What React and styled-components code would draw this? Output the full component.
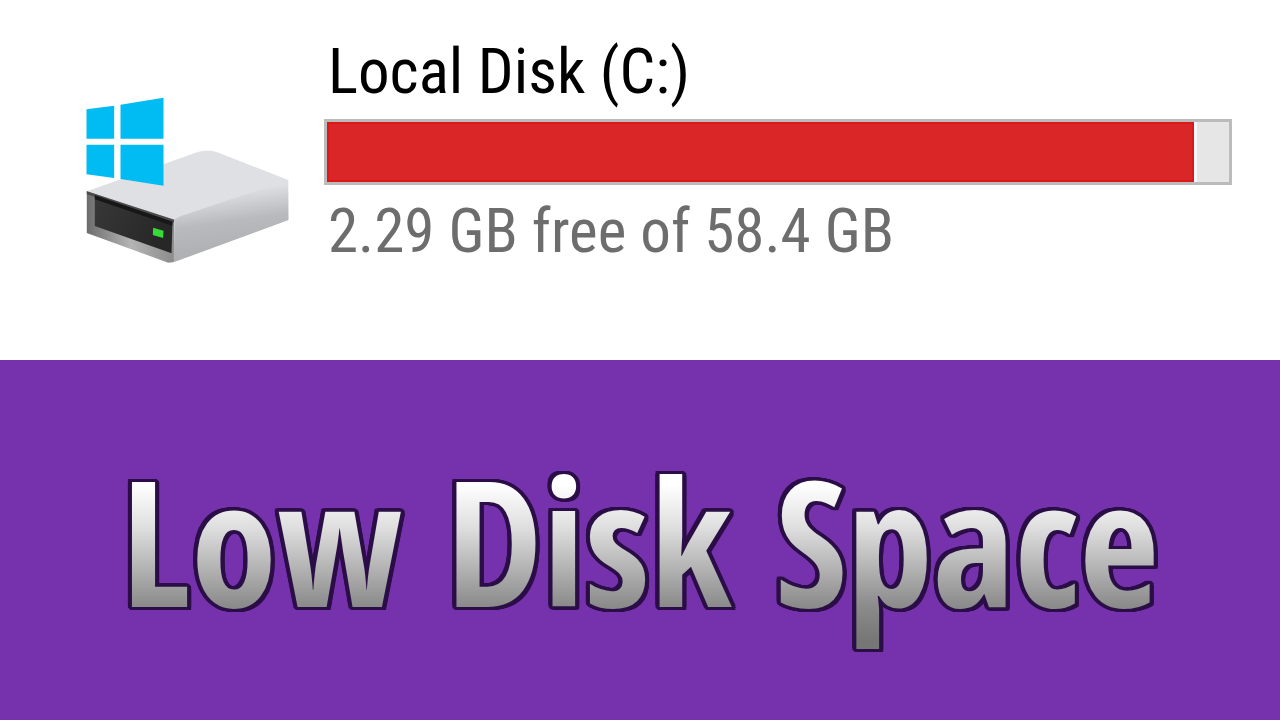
import React from 'react';
import styled, { createGlobalStyle } from 'styled-components';

const GlobalStyle = createGlobalStyle`
    body {
        margin: 0;
        background-color: white;
    }
`;

const Page = styled.main`
    min-height: 100vh;
    display: grid;
    grid-template-rows: 1fr 1fr;
`;

const DrivePanel = styled.section`
    display: flex;
    align-items: flex-start;
    gap: 33px;
    padding: 36px 48px 0px 85px;
    background-color: white;
`;

const DriveIconStyled = styled.svg`
    flex: none;
    width: 206px;
    height: 170px;
    margin-top: 59px;
`;

const DriveDetails = styled.div`
    flex: 1;
    min-width: 0;
`;

const DriveText = styled.div`
    padding-left: 4px;
    font-family: 'Roboto Condensed', Roboto, sans-serif;
    font-size: ${({ $muted }) => ($muted ? '61px' : '63px')};
    font-weight: 400;
    line-height: 72px;
    white-space: nowrap;
    color: ${({ $muted }) => ($muted ? '#6d6d6d' : 'black')};
`;

const UsageBar = styled.div`
    box-sizing: border-box;
    height: 66px;
    margin: 11px 0px 10px;
    border: 3px solid #bcbcbc;
    background-color: #e6e6e6;
`;

const UsageFill = styled.div`
    box-sizing: border-box;
    height: 100%;
    border: 2px solid #da1a1a;
    background-color: #da2626;
    box-shadow: 3px 0px 0px 0px #f4f8f8;
`;

const TitlePanel = styled.section`
    display: flex;
    justify-content: center;
    align-items: center;
    background-color: #7632ad;
`;

const Title = styled.h1`
    margin: 0;
    font-family: 'Open Sans Condensed', 'Roboto Condensed', sans-serif;
    font-size: 174px;
    font-weight: 700;
    line-height: 240px;
    white-space: nowrap;
    color: transparent;
    background-image: linear-gradient(#ffffff 27%, #dedede 45%, #8c8c8c 77%, #767676 92%);
    background-clip: text;
    filter: drop-shadow(2px 0px 0px #2b0e47) drop-shadow(-2px 0px 0px #2b0e47)
        drop-shadow(0px 2px 0px #2b0e47) drop-shadow(0px -2px 0px #2b0e47)
        drop-shadow(1px 1px 0px #2b0e47) drop-shadow(-1px -1px 0px #2b0e47)
        drop-shadow(1px 0px 0px #2b0e47) drop-shadow(-1px 0px 0px #2b0e47);
`;

const DriveIcon = () => (
    <DriveIconStyled viewBox="48 45 615 510" aria-hidden="true">
        <defs>
            <linearGradient id="side" x1="0.4" y1="0" x2="0.6" y2="1">
                <stop offset="0.15" stopColor="#dfe0e3" />
                <stop offset="0.5" stopColor="#b9babd" />
                <stop offset="1" stopColor="#aaabad" />
            </linearGradient>
            <linearGradient id="rim" x1="0" y1="0" x2="1" y2="0">
                <stop offset="0" stopColor="#6d6d6d" />
                <stop offset="0.5" stopColor="#b4b4b5" />
                <stop offset="1" stopColor="#8c8c8d" />
            </linearGradient>
            <linearGradient id="bay" x1="0" y1="0" x2="1" y2="0.4">
                <stop offset="0" stopColor="#383838" />
                <stop offset="1" stopColor="#272727" />
            </linearGradient>
        </defs>
        <path d="M52 334 L385 216 Q414 206 444 217 L656 300 L656 420 L305 548 L52 459 Z" fill="#dfe0e3" />
        <path d="M316 418 Q330 408 360 400 L656 300 L657 420 L312 547 Z" fill="url(#side)" />
        <path d="M52 334 L314 419 L313 546 L296 548 L52 459 Z" fill="url(#rim)" />
        <path d="M52 334 L314 419 L313 428 L52 343 Z" fill="#4b4b4b" />
        <path d="M76 346 L309 425 L306 520 L76 438 Z" fill="url(#bay)" />
        <path d="M76 346 L309 425 L308 437 L76 358 Z" fill="#171717" />
        <path d="M251 443 L282 452 L281 474 L250 465 Z" fill="#35dc35" />
        <path d="M51 88 L134 77 L134 176 L51 176 Z" fill="#00bcf2" />
        <path d="M153 74 L282 53 L282 176 L153 176 Z" fill="#00bcf2" />
        <path d="M51 194 L134 194 L134 294 L51 283 Z" fill="#00bcf2" />
        <path d="M153 194 L282 194 L282 317 L153 297 Z" fill="#00bcf2" />
    </DriveIconStyled>
);

const drive = {
    name: 'Local Disk (C:)',
    free: 2.29,
    total: 58.4
};

const App = () => {
    const used = drive.total - drive.free;

    return (
        <Page>
            <GlobalStyle />
            <DrivePanel>
                <DriveIcon />
                <DriveDetails>
                    <DriveText id="drive-name">{drive.name}</DriveText>
                    <UsageBar
                        role="meter"
                        aria-labelledby="drive-name"
                        aria-valuemin={0}
                        aria-valuemax={drive.total}
                        aria-valuenow={used}
                    >
                        <UsageFill style={{ width: `${(used / drive.total) * 100}%` }} />
                    </UsageBar>
                    <DriveText $muted>
                        {drive.free} GB free of {drive.total} GB
                    </DriveText>
                </DriveDetails>
            </DrivePanel>
            <TitlePanel>
                <Title>Low Disk Space</Title>
            </TitlePanel>
        </Page>
    );
};

export default App;
